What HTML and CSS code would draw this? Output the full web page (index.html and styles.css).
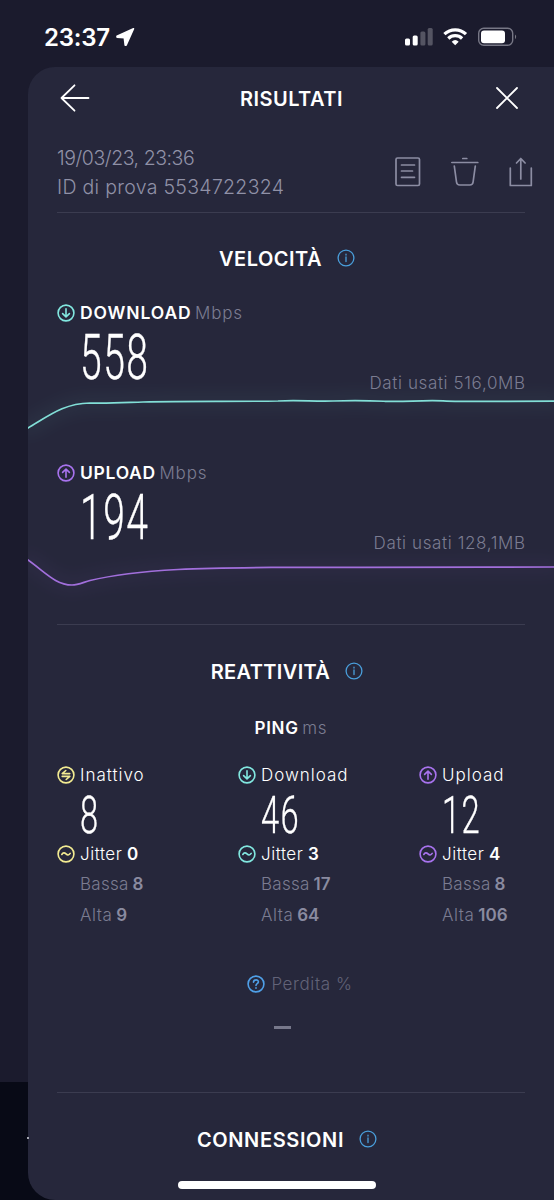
FILE: index.html
```
<!DOCTYPE html>
<html lang="it">
<head>
<meta charset="utf-8">
<title>Risultati</title>
<link rel="stylesheet" href="styles.css">
</head>
<body>
<svg class="defs" width="0" height="0" aria-hidden="true">
  <symbol id="down" viewBox="0 0 18 18"><circle cx="9" cy="9" r="7.9"/><path d="M9 4.8v8M5.6 9.6 9 12.9l3.4-3.3"/></symbol>
  <symbol id="up" viewBox="0 0 18 18"><circle cx="9" cy="9" r="7.9"/><path d="M9 13.2v-8M5.6 8.4 9 5.1l3.4 3.3"/></symbol>
  <symbol id="idle" viewBox="0 0 18 18"><circle cx="9" cy="9" r="7.9"/><path d="M12.800 7.600H5.200L8.800 4.500M5.200 10.400h7.600L9.200 13.500"/></symbol>
  <symbol id="wave" viewBox="0 0 18 18"><circle cx="9" cy="9" r="7.9"/><path d="M4.8 9.5c1.3-2.2 2.8-2 4.2-.6s2.900 1.500 4.200-.5"/></symbol>
  <symbol id="info" viewBox="0 0 18 18"><circle cx="9" cy="9" r="7.900"/><path d="M9 8v4.500M9 5.200v.800"/></symbol>
  <symbol id="help" viewBox="0 0 18 18"><circle cx="9" cy="9" r="7.900"/><path d="M6.500 7.100C6.700 4 11.500 4.200 11.400 6.900 11.300 8.700 9 8.600 9 10.400M9 12.800v.400"/></symbol>
</svg>

<div class="status">
  <span class="time">23:37</span>
  <svg class="loc" width="20" height="20" viewBox="0 0 20 20"><path d="M18.500 1.700 2 9.200v.900l7.300.600.900 7.400h.900z"/></svg>
  <svg class="signals" width="112" height="20" viewBox="0 0 112 20">
    <rect x="0" y="11.500" width="5" height="7" rx="1.500"/><rect x="7.700" y="8.500" width="5" height="10" rx="1.500"/>
    <g opacity=".25"><rect x="15.400" y="4.500" width="5" height="14" rx="1.500"/><rect x="22.700" y="1" width="5" height="17.500" rx="1.500"/></g>
    <g class="arcs"><path d="M39.400 7.200a15.500 15.500 0 0 1 21.600 0M43.300 11.500a9.800 9.800 0 0 1 13.800 0"/></g>
    <path d="M46.700 14.700a5.200 5.200 0 0 1 7 0L50.200 18.300z"/>
    <rect class="case" x="73.700" y="1.300" width="34" height="17" rx="5"/>
    <rect x="76" y="3.500" width="24" height="12.700" rx="3"/>
    <path opacity=".4" d="M110 7.500q2.300 2.200 0 4.800z"/>
  </svg>
</div>

<div class="under"></div>

<main class="panel">
  <header class="bar">
    <svg width="30" height="28" viewBox="0 0 30 28"><path d="M28.500 14H1.500M14.500 1.300 1.500 14l13 12.700"/></svg>
    <h1 class="title t-ris">RISULTATI</h1>
    <svg width="24" height="24" viewBox="0 0 24 24"><path d="M2 2l20 20M22 2 2 22"/></svg>
  </header>

  <section class="meta">
    <div class="ids"><div class="date">19/03/23, 23:36</div><div class="id">ID di prova 5534722324</div></div>
    <div class="tools">
      <svg width="26" height="30" viewBox="0 0 26 30"><rect x="1" y="1" width="23.500" height="27.500" rx="1.500"/><path d="M6.500 8h13M6.500 14h11M6.500 20.300h13"/></svg>
      <svg width="28" height="30" viewBox="0 0 28 30"><path d="M.8 5.500h26M11.800 1.500h4M3.300 9 5.500 25q.4 3 3.200 3h10.200q2.800 0 3.200-3L24.300 9"/></svg>
      <svg width="24" height="30" viewBox="0 0 24 30"><path d="M1.300 11v17.500h21V11M11.800 22V1.500M7.500 6l4.300-4.500L16.100 6"/></svg>
    </div>
  </section>

  <section class="speed">
    <h2 class="heading"><span class="title t-vel">VELOCITÀ</span><svg class="ic info"><use href="#info"/></svg></h2>
    <div class="metric">
      <div class="label"><svg class="ic cyan"><use href="#down"/></svg><b class="l-down">DOWNLOAD</b><span class="unit">Mbps</span></div>
      <div class="row"><span class="big">558</span><span class="used">Dati usati 516,0MB</span></div>
      <svg class="chart c-cyan" width="526" height="60" viewBox="0 0 526 60">
        <path class="glow" d="M0 40C22 27 36 16 62 15 82 15.500 98 14.500 115 14 160 12.500 205 14 250 13 275 11.500 285 14 305 13 330 11 340 12 357 13.500 380 14.500 395 11.500 420 13.500 445 14.500 470 13 526 13.300"/>
        <path d="M0 40C22 27 36 15.500 62 15 82 15.500 98 14.500 115 14 160 12.800 205 13.800 250 13 270 12 285 13.500 305 13 330 12 340 12.500 357 13.300 380 14 390 12 415 12.800 440 14 470 13.200 526 13.200"/>
      </svg>
    </div>
    <div class="metric">
      <div class="label"><svg class="ic purple"><use href="#up"/></svg><b class="l-up">UPLOAD</b><span class="unit">Mbps</span></div>
      <div class="row"><span class="big">194</span><span class="used">Dati usati 128,1MB</span></div>
      <svg class="chart c-purple" width="526" height="60" viewBox="0 0 526 60">
        <path class="glow" d="M0 12C18 25 32 40 51 36 70 29 115 23 155 21.500 200 19 260 19.200 526 19"/>
        <path d="M0 12C18 25 28 37 44 37 50 37 56 34 62 32.500 85 27 115 23.500 150 21.500 200 19 260 19.200 526 19"/>
      </svg>
    </div>
  </section>

  <section class="react">
    <h2 class="heading"><span class="title t-rea">REATTIVITÀ</span><svg class="ic info"><use href="#info"/></svg></h2>
    <div class="ping"><b>PING</b><span class="unit">ms</span></div>
    <div class="cols">
      <div class="col yellow">
        <div class="line"><svg class="ic"><use href="#idle"/></svg><span class="name">Inattivo</span></div>
        <div class="mid">8</div>
        <div class="line"><svg class="ic"><use href="#wave"/></svg><span class="jit">Jitter</span><b>0</b></div>
        <div class="sub"><span class="bas">Bassa</span><b>8</b></div>
        <div class="sub"><span class="alt">Alta</span><b>9</b></div>
      </div>
      <div class="col cyan">
        <div class="line"><svg class="ic"><use href="#down"/></svg><span class="name">Download</span></div>
        <div class="mid">46</div>
        <div class="line"><svg class="ic"><use href="#wave"/></svg><span class="jit">Jitter</span><b>3</b></div>
        <div class="sub"><span class="bas">Bassa</span><b>17</b></div>
        <div class="sub"><span class="alt">Alta</span><b>64</b></div>
      </div>
      <div class="col purple">
        <div class="line"><svg class="ic"><use href="#up"/></svg><span class="name">Upload</span></div>
        <div class="mid">12</div>
        <div class="line"><svg class="ic"><use href="#wave"/></svg><span class="jit">Jitter</span><b>4</b></div>
        <div class="sub"><span class="bas">Bassa</span><b>8</b></div>
        <div class="sub"><span class="alt">Alta</span><b>106</b></div>
      </div>
    </div>
    <div class="loss"><svg class="ic help"><use href="#help"/></svg><span>Perdita %</span></div>
    <div class="dash"></div>
  </section>

  <section class="conn">
    <h2 class="heading"><span class="title t-con">CONNESSIONI</span><svg class="ic info"><use href="#info"/></svg></h2>
  </section>
  <div class="home"></div>
</main>
</body>
</html>
```
FILE: styles.css
```
* { box-sizing: border-box; }
body {
  margin: 0;
  position: relative;
  width: 554px;
  height: 1200px;
  overflow: hidden;
  background: #1b1b2d;
  color: #fff;
  font: 300 17px/20px Inter, "Liberation Sans", sans-serif;
}
h1, h2 { margin: 0; font-size: inherit; font-weight: inherit; }
b { font-weight: 600; }
svg { flex: none; fill: none; stroke: currentColor; stroke-width: 1.8; stroke-linecap: round; stroke-linejoin: round; }
.defs { position: absolute; }

.status { height: 67px; padding: 7px 0 0 44px; display: flex; align-items: center; }
.time { font-size: 24px; font-weight: 600; width: 71px; letter-spacing: -.25px; padding-top: 1px; }
.status svg { fill: #fff; stroke: none; }
.status .loc { stroke: #fff; stroke-width: 1.600; }
.status .signals { margin-left: 270px; }
.signals .arcs { fill: none; stroke: #fff; stroke-width: 3.2; stroke-linecap: butt; }
.signals .case { fill: none; stroke: #777785; stroke-width: 1.400; }

.under { position: absolute; left: 0; top: 1082px; width: 80px; height: 118px; background: #080a16; }

.panel {
  position: relative;
  height: 1133px;
  margin-left: 28px;
  background: #26273b;
  border-radius: 27px 0 0 27px;
  display: flex;
  flex-direction: column;
}
.panel::before { content: ""; position: absolute; left: -1px; top: 1070px; width: 2px; height: 2px; background: #a5a6b0; }
.bar { height: 62px; padding: 0 35px 0 32px; display: flex; align-items: center; justify-content: space-between; }
.title { font-size: 20px; font-weight: 600; line-height: 24px; padding-top: 1px; }
.t-ris { letter-spacing: .45px; margin-right: 2px; }
.t-vel { letter-spacing: .48px; }
.t-rea { letter-spacing: .36px; }
.t-con { letter-spacing: .63px; }

.meta { height: 84px; margin: 0 29px; border-bottom: 1px solid #3b3c50; display: flex; justify-content: space-between; padding-top: 15px; }
.ids { font-size: 19.500px; line-height: 28.500px; color: #9091a7; white-space: nowrap; }
.date { letter-spacing: -.450px; }
.id { letter-spacing: .300px; }
.tools { display: flex; gap: 30px; margin: 13px -8px 0 0; color: #8c8da3; }
.tools svg { stroke-width: 1.700; }

.heading { display: flex; align-items: center; justify-content: center; gap: 15px; height: 24px; padding-right: 8px; }
.ic { width: 18px; height: 18px; stroke-width: 1.600; }
.info { color: #4a9fdc; stroke-width: 1.300; }
.help { color: #4fa0e8; }
.cyan .ic, .cyan.ic { color: #82e8e0; }
.purple .ic, .purple.ic { color: #a873ee; }
.yellow .ic { color: #f3ec92; }

.speed { height: 412px; margin: 0 29px; padding-top: 33px; border-bottom: 1px solid #3b3c50; }
.metric { height: 160px; padding-top: 33px; }
.label, .line { display: flex; align-items: center; height: 20px; white-space: nowrap; }
.label .ic, .line .ic { margin-right: 5px; }
.label b { font-size: 17.500px; }
.l-down { letter-spacing: .880px; }
.l-up { letter-spacing: .700px; }
.unit { color: #7b7c91; margin-left: 3.500px; letter-spacing: .850px; }
.row { display: flex; justify-content: space-between; height: 60px; }
.big, .mid { font-family: Roboto, sans-serif; font-weight: 300; transform-origin: 0 50%; transform: scaleX(.62); letter-spacing: 2.400px; -webkit-text-stroke: .400px #fff; }
.big { margin: 1px 0 0 23px; font-size: 63px; line-height: 68px; height: 68px; }
.used { margin: 50px -.600px 0 0; color: #7b7c91; white-space: nowrap; letter-spacing: .620px; }
.chart { display: block; margin: 5px 0 0 -29px; stroke-width: 1.700; overflow: visible; clip-path: inset(-30px 0); }
.chart .glow { stroke-width: 16; opacity: .05; filter: blur(8px); }
.c-cyan { color: #82dfd7; }
.c-purple { color: #a26fdc; }

.react { height: 468px; margin: 0 29px; padding-top: 34px; border-bottom: 1px solid #3b3c50; }
.ping { margin-top: 35px; display: flex; justify-content: center; }
.ping b { letter-spacing: .700px; }
.cols { display: grid; grid-template-columns: 181px 181px 106px; margin-top: 27px; }
.name { letter-spacing: .980px; }
.jit { letter-spacing: .530px; }
.bas { letter-spacing: .250px; }
.alt { letter-spacing: .500px; }
.mid { margin-left: 23px; height: 59px; font-size: 52.700px; line-height: 60px; }
.line b { margin-left: 4.500px; }
.sub { height: 20px; margin: 10.300px 0 0 23px; display: flex; white-space: nowrap; color: #8a8ba0; }
.sub span { color: #7b7c91; }
.sub b { margin-left: 4px; }
.loss { margin: 49px 0 0; padding-left: 18px; display: flex; justify-content: center; align-items: center; gap: 6px; color: #626378; letter-spacing: .600px; }
.dash { width: 17px; height: 3px; margin: 32px 0 0 217px; background: #77788b; }
.conn { padding-top: 34px; }
.home { position: absolute; left: 150px; bottom: 11px; width: 198px; height: 8px; border-radius: 4px; background: #fff; }
```
